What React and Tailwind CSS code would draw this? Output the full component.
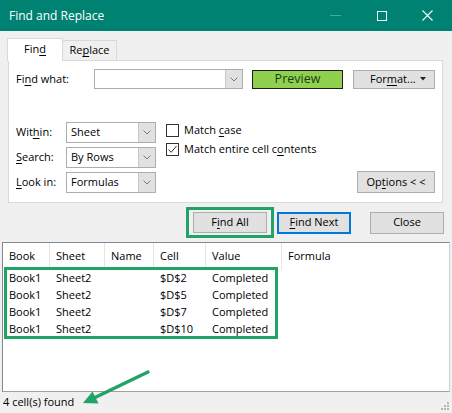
import React from 'react';

// Find and Replace dialog (Excel style) with results list + green annotations

const U = ({ children }) => <span className="underline underline-offset-[2px] decoration-1">{children}</span>;

function Chevron() {
    return (
        <svg width="8" height="5" viewBox="0 0 8 5" className="block">
            <polyline points="0.5,0.5 4,4 7.5,0.5" fill="none" stroke="#7a7a7a" strokeWidth="1" />
        </svg>
    );
}

function Select({ value }) {
    return (
        <div className="w-[90px] h-[21px] flex border border-[#adadad] bg-white">
            <div className="flex-1 flex items-center pl-[4px]">{value}</div>
            <div className="w-[17px] flex items-center justify-center bg-[#e1e1e1] border-l border-[#c8c8c8]">
                <Chevron />
            </div>
        </div>
    );
}

function Checkbox({ checked, children }) {
    return (
        <div className="h-[19px] flex items-center gap-[5px]">
            <div className="w-[13px] h-[13px] border border-[#333] bg-white flex items-center justify-center">
                {checked && (
                    <svg width="11" height="11" viewBox="0 0 11 11">
                        <polyline points="1.5,5.5 4.2,8.3 9.5,2" fill="none" stroke="#333" strokeWidth="1" />
                    </svg>
                )}
            </div>
            <span>{children}</span>
        </div>
    );
}

const results = [
    ['Book1', 'Sheet2', '', '$D$2', 'Completed'],
    ['Book1', 'Sheet2', '', '$D$5', 'Completed'],
    ['Book1', 'Sheet2', '', '$D$7', 'Completed'],
    ['Book1', 'Sheet2', '', '$D$10', 'Completed'],
];

const cols = 'grid grid-cols-[47px_55px_49px_52px_76px_1fr]';

export default function App() {
    return (
        <div className="relative w-[452px] h-[413px] bg-[#f0f0f0] flex flex-col overflow-hidden text-[11px] text-black font-['Open_Sans',sans-serif]">

            {/* Title bar */}
            <div className="h-[31px] shrink-0 bg-[#008272] flex items-center text-white">
                <div className="pl-[9px] text-[12px]">Find and Replace</div>
                <div className="ml-auto flex items-center">
                    <div className="w-[11px] h-px bg-[#4aa89b] mr-[36px]" />
                    <div className="w-[10px] h-[10px] border border-white mr-[35px]" />
                    <svg width="11" height="11" viewBox="0 0 11 11" className="mr-[19px]">
                        <path d="M0.5 0.5 L10.5 10.5 M10.5 0.5 L0.5 10.5" stroke="#fff" strokeWidth="1.1" />
                    </svg>
                </div>
            </div>

            {/* Dialog body */}
            <div className="flex flex-col pl-[8px] pt-[7px]">
                {/* Tabs */}
                <div className="flex items-end h-[22px] relative z-10 -ml-px">
                    <div className="w-[56px] h-[23px] -mb-px bg-white border border-b-0 border-[#d9d9d9] flex items-center justify-center pb-[2px]">
                        Fin<U>d</U>
                    </div>
                    <div className="w-[55px] h-[20px] -ml-px bg-[#f0f0f0] border border-b-0 border-[#d9d9d9] flex items-center justify-center">
                        Re<U>p</U>lace
                    </div>
                </div>

                {/* Tab panel */}
                <div className="w-[435px] h-[143px] bg-white border border-[#d9d9d9] flex flex-col pl-[7px] pr-[7px] pt-[8px]">
                    <div className="flex items-center h-[20px]">
                        <div className="w-[78px]">Fi<U>n</U>d what:</div>
                        <div className="w-[149px] h-[20px] flex border border-[#adadad]">
                            <div className="flex-1" />
                            <div className="w-[17px] flex items-center justify-center bg-[#e1e1e1] border-l border-[#c8c8c8]">
                                <Chevron />
                            </div>
                        </div>
                        <div className="ml-[9px] w-[91px] h-[19px] bg-[#8fd14f] border border-[#1e1e1e] flex items-center justify-center text-[12.5px] text-[#1b3d14]">
                            Preview
                        </div>
                        <div className="ml-[10px] w-[82px] h-[19px] bg-[#e1e1e1] border border-[#adadad] flex items-center pl-[16px]">
                            For<U>m</U>at...
                            <svg width="6" height="4" viewBox="0 0 6 4" className="ml-auto mr-[8px]">
                                <polygon points="0,0 6,0 3,3.5" fill="#222" />
                            </svg>
                        </div>
                    </div>

                    <div className="flex mt-[33px]">
                        <div className="flex flex-col gap-[4px]">
                            <div className="flex items-center">
                                <div className="w-[50px]">Wit<U>h</U>in:</div>
                                <Select value="Sheet" />
                            </div>
                            <div className="flex items-center">
                                <div className="w-[50px]"><U>S</U>earch:</div>
                                <Select value="By Rows" />
                            </div>
                            <div className="flex items-center">
                                <div className="w-[50px]"><U>L</U>ook in:</div>
                                <Select value="Formulas" />
                            </div>
                        </div>
                        <div className="ml-[10px] -mt-px flex flex-col">
                            <Checkbox>Match <U>c</U>ase</Checkbox>
                            <Checkbox checked>Match entire cell c<U>o</U>ntents</Checkbox>
                        </div>
                        <div className="ml-auto self-end w-[78px] h-[22px] bg-[#e1e1e1] border border-[#adadad] flex items-center justify-center">
                            Op<U>t</U>ions &lt; &lt;
                        </div>
                    </div>
                </div>
            </div>

            {/* Action buttons */}
            <div className="mt-[4px] flex items-center justify-end pr-[8px]">
                <div className="border-[3px] border-[#21a366] px-[4px] py-[2px]">
                    <div className="w-[74px] h-[21px] bg-[#e1e1e1] border border-[#adadad] flex items-center justify-center">
                        F<U>i</U>nd All
                    </div>
                </div>
                <div className="ml-[3px] w-[74px] h-[22px] bg-[#e1e1e1] border-2 border-[#0078d7] flex items-center justify-center">
                    <U>F</U>ind Next
                </div>
                <div className="ml-[19px] w-[74px] h-[22px] bg-[#e1e1e1] border border-[#adadad] flex items-center justify-center">
                    Close
                </div>
            </div>

            {/* Results list */}
            <div className="relative mt-[4px] mx-[2px] flex-1 bg-white border-l border-t border-r border-b border-l-[#828790] border-t-[#828790] border-r-[#d0d0d0] border-b-[#a0a0a0]">
                <div className={`${cols} h-[27px]`}>
                    {['Book', 'Sheet', 'Name', 'Cell', 'Value', 'Formula'].map((h, i) => (
                        <div key={h} className={`flex items-center pl-[6px] ${i < 5 ? 'border-r border-[#e5e5e5]' : ''}`}>{h}</div>
                    ))}
                </div>
                {results.map((r, i) => (
                    <div key={i} className={`${cols} h-[17px]`}>
                        {r.map((c, j) => (
                            <div key={j} className="flex items-center pl-[6px]">{c}</div>
                        ))}
                        <div />
                    </div>
                ))}
                {/* highlight annotation */}
                <div className="absolute left-[1px] top-[24px] w-[274px] h-[72px] border-[3px] border-[#21a366]" />
            </div>

            {/* Status bar */}
            <div className="h-[21px] shrink-0 flex items-center pl-[3px]">
                4 cell(s) found
                <svg width="10" height="10" viewBox="0 0 10 10" className="ml-auto mr-[2px] mt-[6px]">
                    <g fill="#b5b5b5">
                        <rect x="7" y="1" width="2" height="2" />
                        <rect x="7" y="4" width="2" height="2" />
                        <rect x="4" y="4" width="2" height="2" />
                        <rect x="7" y="7" width="2" height="2" />
                        <rect x="4" y="7" width="2" height="2" />
                        <rect x="1" y="7" width="2" height="2" />
                    </g>
                </svg>
            </div>

            {/* Arrow annotation */}
            <svg className="absolute left-0 top-0 pointer-events-none" width="452" height="413" viewBox="0 0 452 413">
                <line x1="148" y1="372" x2="95" y2="397.5" stroke="#21a366" strokeWidth="3.5" strokeLinecap="round" />
                <polygon points="83,403 98.5,403.5 92.5,391.5" fill="#21a366" />
            </svg>
        </div>
    );
}
